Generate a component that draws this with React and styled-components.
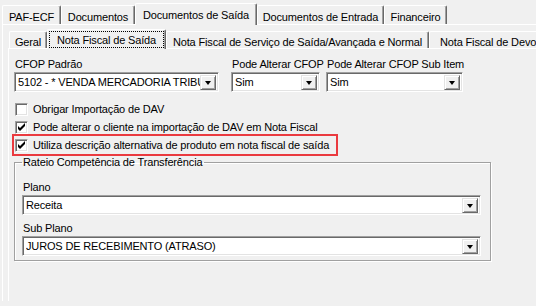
import React from 'react'
import styled, { createGlobalStyle } from 'styled-components'

const GlobalStyle = createGlobalStyle`
  html, body {
    margin: 0;
    background: #f0f0f0;
  }
  body {
    width: 536px;
    height: 306px;
    overflow: hidden;
    font-family: "Liberation Sans", Arial, sans-serif;
    font-size: 11px;
    letter-spacing: -0.15px;
    color: #000;
  }
`

const Page = styled.div`
  padding: 3px 0 0 2px;
`

const TabBar = styled.div`
  display: flex;
  align-items: flex-end;
  height: ${p => p.$height}px;
  margin-left: ${p => p.$offset || 0}px;
  white-space: nowrap;
`

const Tab = styled.div`
  position: relative;
  flex: none;
  box-sizing: border-box;
  width: ${p => p.$width}px;
  height: ${p => (p.$active ? p.$height + 3 : p.$height)}px;
  margin-bottom: ${p => (p.$active ? -1 : 0)}px;
  padding-top: ${p => (p.$active ? 0 : 3)}px;
  padding-left: ${p => p.$shift || 0}px;
  display: flex;
  align-items: center;
  justify-content: ${p => (p.$start ? 'flex-start' : 'center')};
  background: #f0f0f0;
  border-top: 1px solid #fff;
  border-left: 1px solid #fff;
  border-right: 1px solid #696969;
  box-shadow: inset -1px 0 0 #a0a0a0;
  border-radius: 2px 2px 0 0;
  z-index: ${p => (p.$active ? 2 : 1)};
  overflow: hidden;
`

const FocusBox = styled.span`
  display: flex;
  align-items: center;
  justify-content: center;
  align-self: stretch;
  flex: 1;
  margin: 1px;
  border: 1px dotted #000;
`

const Panel = styled.div`
  border-top: 1px solid #fff;
  border-left: 1px solid #fff;
  padding: ${p => p.$pad};
`

const TopRow = styled.div`
  display: flex;
`

const Field = styled.div`
  display: flex;
  flex-direction: column;
  width: ${p => (p.$width ? `${p.$width}px` : 'auto')};
  margin-left: ${p => p.$gap || 0}px;
  margin-top: ${p => p.$top || 0}px;
`

const Label = styled.div`
  height: 13px;
  line-height: 13px;
  margin-bottom: 1px;
  padding-left: 1px;
  white-space: nowrap;
  overflow: visible;
`

const Combo = styled.div`
  display: flex;
  align-items: stretch;
  box-sizing: border-box;
  height: 20px;
  background: #fff;
  border-top: 1px solid #a0a0a0;
  border-left: 1px solid #a0a0a0;
  border-right: 1px solid #fff;
  border-bottom: 1px solid #fff;
  box-shadow: inset 1px 1px 0 #696969, inset -1px -1px 0 #e3e3e3;
  padding: 2px 2px 1px 3px;
`

const ComboText = styled.span`
  flex: 1;
  display: flex;
  align-items: center;
  overflow: hidden;
  white-space: nowrap;
  padding-bottom: 1px;
`

const DropButton = styled.span`
  flex: none;
  width: 16px;
  box-sizing: border-box;
  display: flex;
  align-items: center;
  justify-content: center;
  background: #f0f0f0;
  border-top: 1px solid #e3e3e3;
  border-left: 1px solid #e3e3e3;
  border-right: 1px solid #696969;
  border-bottom: 1px solid #696969;
  box-shadow: inset 1px 1px 0 #fff, inset -1px -1px 0 #a0a0a0;

  &::after {
    content: '';
    width: 0;
    height: 0;
    margin-top: 1px;
    border-left: 3.5px solid transparent;
    border-right: 3.5px solid transparent;
    border-top: 4px solid #000;
  }
`

const CheckList = styled.div`
  display: flex;
  flex-direction: column;
  margin-top: 8px;
`

const CheckRow = styled.div`
  display: flex;
  align-items: center;
  height: 18px;
  width: fit-content;
  padding: 0 ${p => (p.$highlight ? 7 : 0)}px 0 1px;
  outline: ${p => (p.$highlight ? '2px solid #ea3a3f' : 'none')};
`

const Box = styled.span`
  flex: none;
  display: flex;
  align-items: center;
  justify-content: center;
  box-sizing: border-box;
  width: 13px;
  height: 13px;
  background: #fff;
  border-top: 1px solid #a0a0a0;
  border-left: 1px solid #a0a0a0;
  border-right: 1px solid #fff;
  border-bottom: 1px solid #fff;
  box-shadow: inset 1px 1px 0 #696969, inset -1px -1px 0 #e3e3e3;
  margin-right: 5px;
`

const Group = styled.fieldset`
  box-sizing: border-box;
  width: 477px;
  margin: 2px 0 0 0;
  padding: 0 9px 4px 7px;
  border: 1px solid #a0a0a0;
  box-shadow: inset 1px 1px 0 #fff, 1px 1px 0 #fff;
  min-width: 0;
`

const Legend = styled.legend`
  padding: 0 2px 0 1px;
  line-height: 13px;
`

const Check = () => (
  <svg width="9" height="9" viewBox="0 0 9 9">
    <polygon points="0,3 2,5 7,0 7,3 2,8 0,6" fill="#000" transform="translate(1,0)" />
  </svg>
)

const Select = ({ value }) => (
  <Combo>
    <ComboText>{value}</ComboText>
    <DropButton />
  </Combo>
)

const CheckItem = ({ checked, highlight, children }) => (
  <CheckRow $highlight={highlight}>
    <Box>{checked && <Check />}</Box>
    <span>{children}</span>
  </CheckRow>
)

const outerTabs = [
  { label: 'PAF-ECF', width: 59 },
  { label: 'Documentos', width: 74 },
  { label: 'Documentos de Saída', width: 122, active: true },
  { label: 'Documentos de Entrada', width: 127 },
  { label: 'Financeiro', width: 63 },
]

const innerTabs = [
  { label: 'Geral', width: 38 },
  { label: 'Nota Fiscal de Saída', width: 119, active: true },
  { label: 'Nota Fiscal de Serviço de Saída/Avançada e Normal', width: 263 },
  { label: 'Nota Fiscal de Devolução', width: 130, start: true, shift: 10 },
]

const App = () => {
  return (
    <Page>
      <GlobalStyle />
      <TabBar $height={21}>
        {outerTabs.map(t => (
          <Tab key={t.label} $width={t.width} $height={19} $active={t.active}>
            {t.label}
          </Tab>
        ))}
      </TabBar>

      <Panel $pad="4px 0 0 5px">
        <TabBar $height={19} $offset={1}>
          {innerTabs.map(t => (
            <Tab
              key={t.label}
              $width={t.width}
              $height={17}
              $active={t.active}
              $start={t.start}
              $shift={t.shift}
            >
              {t.active ? <FocusBox>{t.label}</FocusBox> : t.label}
            </Tab>
          ))}
        </TabBar>

        <Panel $pad="9px 0 40px 5px">
          <TopRow>
            <Field $width={205}>
              <Label>CFOP Padrão</Label>
              <Select value="5102 - * VENDA MERCADORIA TRIBUTADA" />
            </Field>
            <Field $width={89} $gap={12}>
              <Label>Pode Alterar CFOP</Label>
              <Select value="Sim" />
            </Field>
            <Field $width={137} $gap={6}>
              <Label>Pode Alterar CFOP Sub Item</Label>
              <Select value="Sim" />
            </Field>
          </TopRow>

          <CheckList>
            <CheckItem>Obrigar Importação de DAV</CheckItem>
            <CheckItem checked>Pode alterar o cliente na importação de DAV em Nota Fiscal</CheckItem>
            <CheckItem checked highlight>
              Utiliza descrição alternativa de produto em nota fiscal de saída
            </CheckItem>
          </CheckList>

          <Group>
            <Legend>Rateio Competência de Transferência</Legend>
            <Field $top={12}>
              <Label>Plano</Label>
              <Select value="Receita" />
            </Field>
            <Field $top={7}>
              <Label>Sub Plano</Label>
              <Select value="JUROS DE RECEBIMENTO (ATRASO)" />
            </Field>
          </Group>
        </Panel>
      </Panel>
    </Page>
  )
}

export default App
